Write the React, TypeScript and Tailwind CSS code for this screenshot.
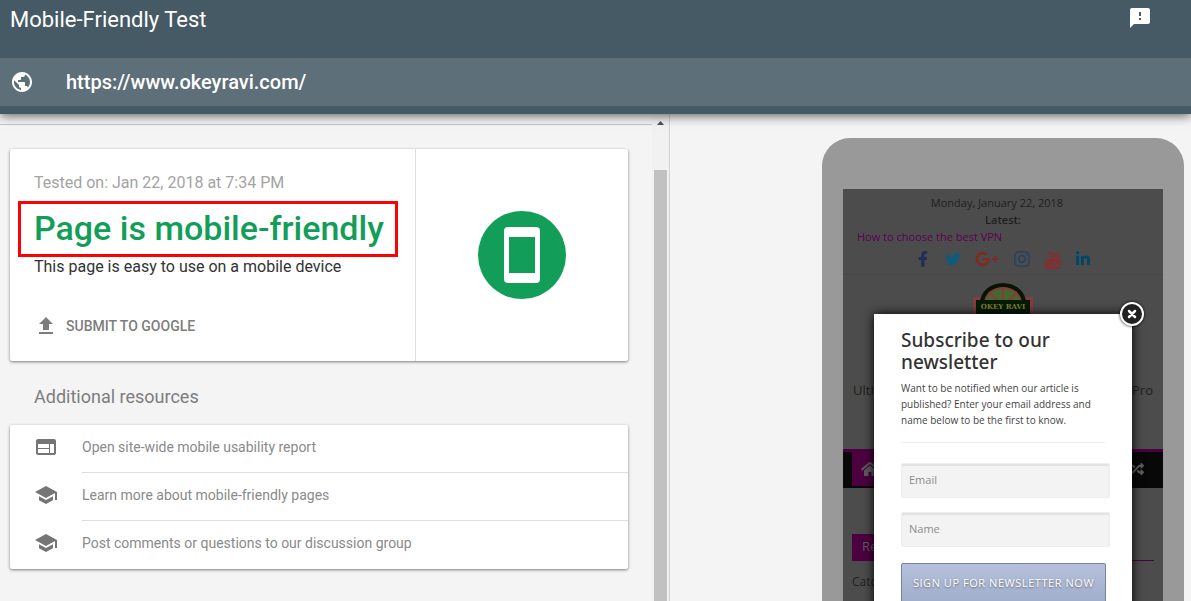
import type { ReactNode } from "react";
import { FaFacebookF, FaGooglePlusG, FaHome, FaInstagram, FaLinkedinIn, FaRandom, FaTwitter } from "react-icons/fa";
import { MdFeedback, MdPublic, MdSchool, MdWeb } from "react-icons/md";

const resources = [
  { icon: MdWeb, label: "Open site-wide mobile usability report" },
  { icon: MdSchool, label: "Learn more about mobile-friendly pages" },
  { icon: MdSchool, label: "Post comments or questions to our discussion group" },
];

function Card({ className = "", children }: { className?: string; children: ReactNode }) {
  return (
    <div className={`rounded-xs bg-white shadow-[0_1px_3px_rgba(0,0,0,0.5)] ${className}`}>{children}</div>
  );
}

function UploadIcon() {
  return (
    <svg viewBox="0 0 24 24" className="size-6 fill-current" aria-hidden="true">
      <path d="M9 16h6v-6h4l-7-7-7 7h4zm-4 2h14v2H5z" />
    </svg>
  );
}

function CloseIcon() {
  return (
    <svg viewBox="0 0 10 10" className="size-[10px]" aria-hidden="true">
      <path d="M2 2l6 6M8 2L2 8" stroke="currentColor" strokeWidth="2.500" strokeLinecap="round" />
    </svg>
  );
}

function YoutubeIcon() {
  return (
    <svg viewBox="0 0 16 19" className="h-[19px] w-4" aria-hidden="true">
      <path
        d="M3 1l2 3.500V8M7 1L5 4.500M8 4v3q0 1 1 1t1-1V4q0-1-1-1T8 4M12 3v4q0 1 1 1t1-1V3"
        fill="none"
        stroke="#8a2c2f"
        strokeWidth="1.200"
      />
      <rect x="0" y="9" width="16" height="10" rx="2" fill="#8a2c2f" />
      <path
        d="M1.500 11.500h3M3 11.500V17M6 13v3q0 1 1 1t1-1v-3M10 11v5.500h1.500V13.500H10M14.800 15.500V17H13.500v-3.500h1.300V15h-1.300"
        fill="none"
        stroke="#4c4c4c"
      />
    </svg>
  );
}

function SiteLogo() {
  return (
    <svg viewBox="0 0 60 60" className="size-[60px]" role="img" aria-label="Okey Ravi">
      <rect x="0" y="14" width="60" height="46" fill="#853c3e" />
      <path d="M7 20a23 20 0 0 1 46 0z" fill="#071507" />
      <path d="M11 20a19 16 0 0 1 38 0z" fill="#853c3e" />
      <path d="M13 20a17 14 0 0 1 34 0z" fill="#47682c" />
      <path d="M30 4v18M16 9l14 15M44 9L30 24" stroke="#853c3e" strokeWidth="2" />
      <rect x="3" y="17" width="54" height="43" fill="#061a08" />
      <text x="30" y="26" textAnchor="middle" fill="#85852a" fontSize="7" fontWeight="700" fontFamily="DejaVu Serif, serif">
        OKEY RAVI
      </text>
    </svg>
  );
}

function Header() {
  return (
    <header className="relative z-10 shrink-0 bg-[#455a64] pb-2 text-white shadow-[0_2px_10px_rgba(0,0,0,0.6)]">
      <div className="flex h-[58px] items-start justify-between pt-1 pr-[39px] pl-[10px]">
        <h1 className="text-[22px] leading-8">Mobile-Friendly Test</h1>
        <button aria-label="Send feedback" className="pt-[2px]">
          <MdFeedback className="size-6" />
        </button>
      </div>
      <div className="flex h-12 items-center gap-8 bg-[#5d6f78] pl-[10px]">
        <MdPublic className="size-6" />
        <p className="text-xl font-medium">https://www.okeyravi.com/</p>
      </div>
    </header>
  );
}

function Results() {
  return (
    <section className="flex min-h-0 border-r border-[#d2d2d2]">
      <div className="min-w-0 flex-1 pt-[10px]">
        <div className="border-t border-[#c8c8c8] pt-6 pr-6 pl-[10px]">
          <Card className="flex h-[212px]">
            <div className="w-[406px] border-r border-[#dedede] pt-5 pl-6">
              <p className="text-base leading-7 text-[#a3a3a3]">Tested on: Jan 22, 2018 at 7:34 PM</p>
              <div className="relative mt-1 h-[54px]">
                <h2 className="text-[34px] leading-[54px] font-medium text-[#129e59]">Page is mobile-friendly</h2>
                <div className="absolute top-0 right-[17px] -bottom-[2px] -left-4 border-3 border-[#fb0207]" />
              </div>
              <p className="text-base leading-6 text-[#333]">This page is easy to use on a mobile device</p>
              <button className="mt-[35px] flex items-center gap-2 text-sm leading-6 font-medium text-[#7d7d7d]">
                <UploadIcon />
                SUBMIT TO GOOGLE
              </button>
            </div>
            <div className="flex flex-1 items-center justify-center">
              <svg viewBox="0 0 88 88" className="size-[88px]" role="img" aria-label="Mobile friendly">
                <circle cx="44" cy="44" r="44" fill="#129e59" />
                <rect x="26" y="16" width="36" height="56" rx="4" fill="#fff" />
                <rect x="31" y="26" width="26" height="36" fill="#129e59" />
              </svg>
            </div>
          </Card>

          <h3 className="pt-[22px] pb-[14px] pl-6 text-lg leading-7 text-[#7d7d7d]">Additional resources</h3>

          <Card>
            <ul>
              {resources.map((item, i) => (
                <li key={item.label}>
                  <a href="#" className="flex h-12 pl-6 text-[#757575]">
                    <item.icon className="mt-[10px] mr-6 size-6" />
                    <span
                      className={`flex-1 pt-3 text-sm leading-5 text-[#8a8a8a] ${i < resources.length - 1 ? "border-b border-[#dedede]" : ""}`}
                    >
                      {item.label}
                    </span>
                  </a>
                </li>
              ))}
            </ul>
          </Card>
        </div>
      </div>

      {/* Scrollbar */}
      <div className="flex w-[17px] flex-col items-center bg-[#f1f1f1]">
        <svg viewBox="0 0 7 4" className="mt-[7px] h-1 w-[7px]" aria-hidden="true">
          <path d="M0 4h7L3.500 0z" fill="#505050" />
        </svg>
        <div className="mt-[45px] w-[13px] flex-1 bg-[#c1c1c1]" />
      </div>
    </section>
  );
}

function SubscribePopup() {
  return (
    <div className="absolute inset-x-[31px] top-[125px] h-[340px] bg-white px-[27px] pt-[15px] shadow-[0_0_10px_#000]">
      <button
        aria-label="Close"
        className="absolute -top-3 -right-3 flex size-6 items-center justify-center rounded-full border-2 border-white bg-[#222] text-white shadow-[0_0_3px_#000]"
      >
        <CloseIcon />
      </button>
      <h2 className="font-['Noto_Sans',sans-serif] text-[19px] leading-[22px] font-medium text-[#333]">
        Subscribe to our newsletter
      </h2>
      <p className="mt-[7px] text-[10px] leading-4 text-[#444]">
        Want to be notified when our article is published? Enter your email address and name below to be the first to know.
      </p>
      <hr className="mt-[14px] border-[#eee]" />
      <form className="-mr-[5px] pt-5">
        <input
          aria-label="Email"
          placeholder="Email"
          className="block h-[35px] w-full rounded-xs border border-[#eee] bg-[#f3f3f3] px-[7px] pb-[2px] text-[11px] shadow-[inset_0_2px_1px_#e2e2e2] placeholder:text-[#8c8c8c]"
        />
        <input
          aria-label="Name"
          placeholder="Name"
          className="mt-[14px] block h-[35px] w-full rounded-xs border border-[#eee] bg-[#f3f3f3] px-[7px] pb-[2px] text-[11px] shadow-[inset_0_2px_1px_#e2e2e2] placeholder:text-[#8c8c8c]"
        />
        <button className="mt-4 h-10 w-[205px] rounded-xs border border-[#78839d] bg-linear-to-b from-[#b5c1dc] to-[#a0adcb] text-[11px] tracking-wider whitespace-nowrap text-white [text-shadow:0_1px_2px_#666]">
          SIGN UP FOR NEWSLETTER NOW
        </button>
      </form>
    </div>
  );
}

function PhonePreview() {
  return (
    <section className="flex min-w-0 justify-end pt-6 pr-[7px]">
      <div className="h-[640px] w-[362px] shrink-0 rounded-[28px] bg-[#999] px-[21px] pt-[51px] font-['Open_Sans',sans-serif]">
        <div className="relative h-[540px] overflow-hidden bg-[#4c4c4c] text-[#1f1f1f]">
          <div className="h-[86px] border-b border-[#474747] px-[14px] pt-[5px] text-[11px] leading-[17px]">
            <p className="mr-3 text-center">Monday, January 22, 2018</p>
            <p className="text-center font-semibold">Latest:</p>
            <a href="#" className="block text-[#5e0054]">
              How to choose the best VPN
            </a>
            <div className="mt-1 flex h-5 items-center justify-center gap-[14px]">
              <FaFacebookF className="size-4 text-[#1f2f57]" />
              <FaTwitter className="size-4 text-[#135a78]" />
              <FaGooglePlusG className="size-6 text-[#822a20]" />
              <FaInstagram className="size-[18px] text-[#23415f]" />
              <YoutubeIcon />
              <FaLinkedinIn className="size-4 text-[#024668]" />
            </div>
          </div>
          <div className="mt-2 flex justify-center">
            <SiteLogo />
          </div>
          <div className="mt-[37px] flex justify-between px-[10px] text-[13px] leading-5">
            <span>Ultimate</span>
            <span>Pro</span>
          </div>
          <nav className="mt-[49px] flex h-[39px] justify-between border-t-3 border-[#4c0040] bg-[#080808] pr-[19px] pb-[2px] pl-[9px] text-[#5c5c5c]">
            <a href="#" aria-label="Home" className="flex w-9 items-center justify-center bg-[#4c0040]">
              <FaHome className="size-[18px]" />
            </a>
            <a href="#" aria-label="Random post" className="flex items-center">
              <FaRandom className="size-[14px]" />
            </a>
          </nav>
          <div className="mx-[9px] mt-[46px] border-b border-[#4c0040]">
            <h4 className="block h-[26px] w-16 bg-[#4c0040] px-[10px] text-[13px] leading-6 text-[#5c5c5c]">Recent</h4>
          </div>
          <p className="mt-[9px] px-[9px] text-xs leading-6">Catch</p>
          <SubscribePopup />
        </div>
      </div>
    </section>
  );
}

export default function App() {
  return (
    <div className="flex h-screen flex-col overflow-hidden bg-[#f4f4f4] font-[Roboto,sans-serif]">
      <Header />
      <main className="grid min-h-0 flex-1 grid-cols-[670fr_521fr]">
        <Results />
        <PhonePreview />
      </main>
    </div>
  );
}
